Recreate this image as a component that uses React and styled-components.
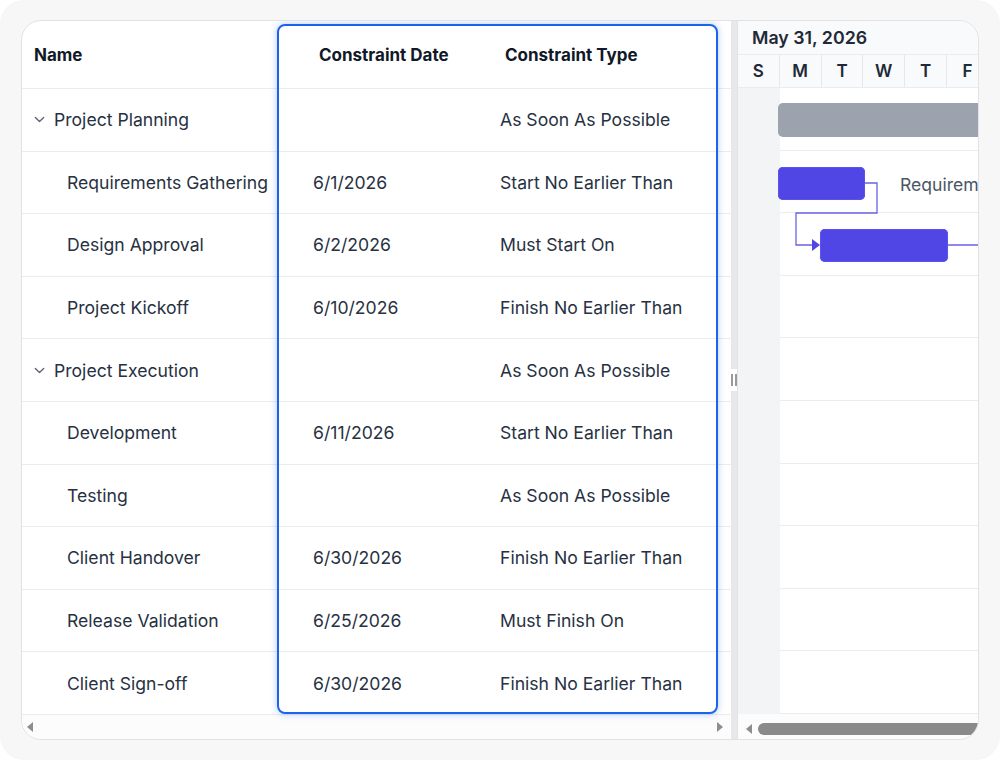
import React from "react";
import styled, { createGlobalStyle } from "styled-components";

const GlobalStyle = createGlobalStyle`
  html, body { margin: 0; padding: 0; background: #ffffff; }
  body { font-family: Inter, "Noto Sans", "Liberation Sans", sans-serif; color: #1f2937; }
`;

const ROW_H = 62.6;
const DAY_W = 41.8;

const Frame = styled.div`
  width: 1000px;
  height: 760px;
  box-sizing: border-box;
  padding: 20px 21px 20px 21px;
  background: #f7f7f8;
  border-radius: 24px;
`;

const Card = styled.div`
  display: flex;
  width: 958px;
  height: 720px;
  box-sizing: border-box;
  background: #fff;
  border: 1px solid #e2e2e4;
  border-radius: 20px;
  overflow: hidden;
`;

const GridPane = styled.div`
  position: relative;
  width: 709px;
  flex-shrink: 0;
  display: flex;
  flex-direction: column;
`;

const Row = styled.div`
  display: grid;
  grid-template-columns: 256px 212px 1fr;
  height: ${(p) => (p.$head ? "68px" : `${ROW_H}px`)};
  flex-shrink: 0;
  box-sizing: border-box;
  border-bottom: 1px solid #ececee;
  align-items: center;
`;

const HeadCell = styled.div`
  font-size: 17px;
  font-weight: 700;
  color: #111827;
  padding-left: ${(p) => p.$pad}px;
  white-space: nowrap;
`;

const Cell = styled.div`
  font-size: 17.6px;
  color: #273142;
  padding-left: ${(p) => p.$pad}px;
  white-space: nowrap;
  overflow: hidden;
  display: flex;
  align-items: center;
  gap: 8px;
`;

const Chevron = styled.svg`
  width: 13px;
  height: 13px;
  flex-shrink: 0;
`;

const Highlight = styled.div`
  position: absolute;
  left: 255px;
  top: 3px;
  width: 441px;
  height: 690px;
  box-sizing: border-box;
  border: 2px solid #1d63ea;
  border-radius: 8px;
  box-shadow: 0 0 7px rgba(29, 99, 234, 0.35);
  pointer-events: none;
`;

const ScrollRow = styled.div`
  flex: 1;
  display: flex;
  align-items: center;
  justify-content: space-between;
  padding: 0 8px 0 5px;
  background: #fcfcfc;
`;

const Arrow = styled.div`
  width: 0;
  height: 0;
  border-top: 5px solid transparent;
  border-bottom: 5px solid transparent;
  ${(p) =>
    p.$dir === "left"
      ? "border-right: 6px solid #8d8d8d;"
      : "border-left: 6px solid #8d8d8d;"}
`;

const Splitter = styled.div`
  width: 6px;
  flex-shrink: 0;
  background: #e8e8ea;
  display: flex;
  align-items: center;
  justify-content: center;
  border-right: 1px solid #e2e2e4;
`;

const Grip = styled.div`
  width: 6px;
  height: 22px;
  background: #fff;
  display: flex;
  justify-content: center;
  align-items: center;
  gap: 2px;
  span {
    width: 2px;
    height: 12px;
    background: #9a9a9a;
  }
`;

const ChartPane = styled.div`
  flex: 1;
  display: flex;
  flex-direction: column;
  overflow: hidden;
  min-width: 0;
`;

const MonthRow = styled.div`
  height: 34px;
  box-sizing: border-box;
  flex-shrink: 0;
  background: #f9fafb;
  border-bottom: 1px solid #ececee;
  display: flex;
  align-items: center;
  padding-left: 14px;
  font-size: 17.8px;
  font-weight: 600;
  color: #1f2937;
  white-space: nowrap;
`;

const DayRow = styled.div`
  height: 33px;
  box-sizing: border-box;
  flex-shrink: 0;
  display: flex;
  background: #f9fafb;
  border-bottom: 1px solid #ececee;
`;

const Day = styled.div`
  width: ${DAY_W}px;
  flex-shrink: 0;
  box-sizing: border-box;
  border-right: 1px solid #e7e7ea;
  display: flex;
  align-items: center;
  justify-content: center;
  font-size: 17px;
  font-weight: 600;
  color: #1f2937;
`;

const Canvas = styled.div`
  position: relative;
  height: ${ROW_H * 10}px;
  flex-shrink: 0;
  width: 600px;
`;

const GridLine = styled.div`
  height: ${ROW_H}px;
  box-sizing: border-box;
  border-bottom: 1px solid #ececee;
`;

const Weekend = styled.div`
  position: absolute;
  left: 0;
  top: 0;
  bottom: 0;
  width: ${DAY_W}px;
  background: #f3f4f6;
`;

const Bar = styled.div`
  position: absolute;
  height: 33px;
  border-radius: 5px;
  background: ${(p) => (p.$summary ? "#9ca3af" : "#4f46e5")};
  box-shadow: ${(p) => (p.$summary ? "none" : "inset 0 0 0 1px #5b52ee")};
`;

const BarLabel = styled.div`
  position: absolute;
  font-size: 17.6px;
  color: #4b5563;
  white-space: nowrap;
`;

const Links = styled.svg`
  position: absolute;
  left: 0;
  top: 0;
  overflow: visible;
`;

const ChartScroll = styled.div`
  flex: 1;
  display: flex;
  align-items: center;
  gap: 6px;
  padding: 4px 0 0 8px;
  background: #fcfcfc;
`;

const Thumb = styled.div`
  flex: 1;
  height: 12px;
  background: #8a8a8a;
  border-radius: 6px;
  margin-right: -20px;
`;

const rows = [
  { name: "Project Planning", parent: true, date: "", type: "As Soon As Possible" },
  { name: "Requirements Gathering", date: "6/1/2026", type: "Start No Earlier Than" },
  { name: "Design Approval", date: "6/2/2026", type: "Must Start On" },
  { name: "Project Kickoff", date: "6/10/2026", type: "Finish No Earlier Than" },
  { name: "Project Execution", parent: true, date: "", type: "As Soon As Possible" },
  { name: "Development", date: "6/11/2026", type: "Start No Earlier Than" },
  { name: "Testing", date: "", type: "As Soon As Possible" },
  { name: "Client Handover", date: "6/30/2026", type: "Finish No Earlier Than" },
  { name: "Release Validation", date: "6/25/2026", type: "Must Finish On" },
  { name: "Client Sign-off", date: "6/30/2026", type: "Finish No Earlier Than" },
];

const days = ["S", "M", "T", "W", "T", "F", "S"];

export default function App() {
  return (
    <>
      <GlobalStyle />
      <Frame>
        <Card>
          <GridPane>
            <Row $head>
              <HeadCell $pad={12}>Name</HeadCell>
              <HeadCell $pad={41}>Constraint Date</HeadCell>
              <HeadCell $pad={15}>Constraint Type</HeadCell>
            </Row>
            {rows.map((r, i) => (
              <Row key={i}>
                <Cell $pad={r.parent ? 11 : 45}>
                  {r.parent && (
                    <Chevron viewBox="0 0 14 14">
                      <path d="M2.5 4.8 L7 9.2 L11.5 4.8" fill="none" stroke="#5b6270" strokeWidth="1.4" strokeLinecap="round" strokeLinejoin="round" />
                    </Chevron>
                  )}
                  {r.name}
                </Cell>
                <Cell $pad={35}>{r.date}</Cell>
                <Cell $pad={10}>{r.type}</Cell>
              </Row>
            ))}
            <ScrollRow>
              <Arrow $dir="left" />
              <Arrow $dir="right" />
            </ScrollRow>
            <Highlight />
          </GridPane>
          <Splitter>
            <Grip>
              <span />
              <span />
            </Grip>
          </Splitter>
          <ChartPane>
            <MonthRow>May 31, 2026</MonthRow>
            <DayRow>
              {days.map((d, i) => (
                <Day key={i}>{d}</Day>
              ))}
            </DayRow>
            <Canvas>
              <Weekend />
              {rows.map((_, i) => (
                <GridLine key={i} />
              ))}
              <Links width="600" height="300">
                <path d="M127 95 H139 V125 H58 V157 H76" fill="none" stroke="#6a62e8" strokeWidth="1.3" />
                <path d="M74 151 L82 157 L74 163 Z" fill="#4f46e5" />
                <path d="M210 157 H400" fill="none" stroke="#6a62e8" strokeWidth="1.3" />
              </Links>
              <Bar $summary style={{ left: 40, top: 15, width: 400, height: 34 }} />
              <Bar style={{ left: 40, top: 79, width: 87 }} />
              <BarLabel style={{ left: 162, top: 86 }}>Requirements Gathering</BarLabel>
              <Bar style={{ left: 82, top: 141, width: 128 }} />
            </Canvas>
            <ChartScroll>
              <Arrow $dir="left" />
              <Thumb />
            </ChartScroll>
          </ChartPane>
        </Card>
      </Frame>
    </>
  );
}
